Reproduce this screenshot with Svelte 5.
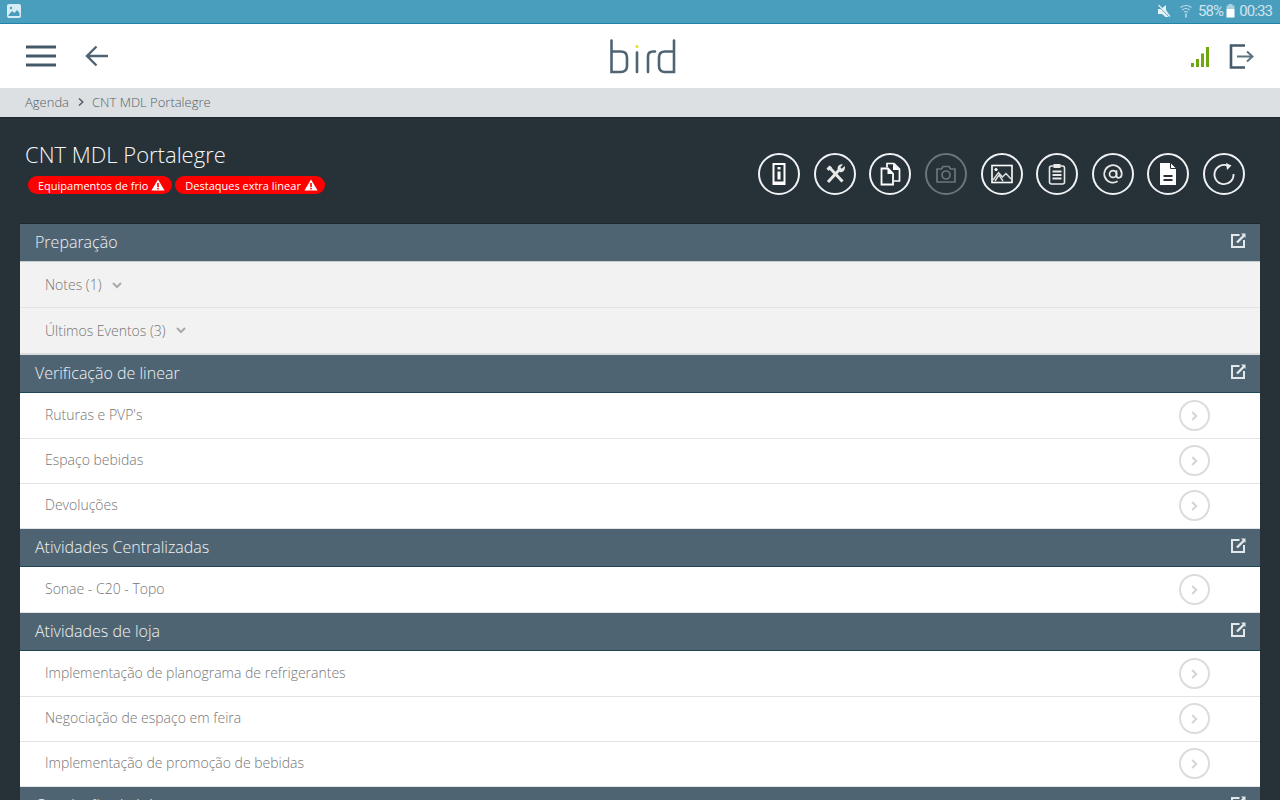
<script lang="ts">
  type Row = { label: string; chevron?: boolean };
  type Section = { title: string; muted?: boolean; rows: Row[] };

  const sections: Section[] = [
    {
      title: "Preparação",
      muted: true,
      rows: [{ label: "Notes (1)", chevron: true }, { label: "Últimos Eventos (3)", chevron: true }],
    },
    {
      title: "Verificação de linear",
      rows: [{ label: "Ruturas e PVP's" }, { label: "Espaço bebidas" }, { label: "Devoluções" }],
    },
    { title: "Atividades Centralizadas", rows: [{ label: "Sonae - C20 - Topo" }] },
    {
      title: "Atividades de loja",
      rows: [
        { label: "Implementação de planograma de refrigerantes" },
        { label: "Negociação de espaço em feira" },
        { label: "Implementação de promoção de bebidas" },
      ],
    },
    { title: "Conclusão de loja", rows: [] },
  ];

  const actions = ["info", "tools", "copy", "camera", "image", "clipboard", "at", "file", "refresh"];
</script>

{#snippet warning()}
  <svg class="warn" viewBox="0 0 14 12" width="14" height="12">
    <path d="M7 0.5 L13.6 11.5 H0.4 Z" fill="#fff" />
    <rect x="6.2" y="4" width="1.6" height="4" fill="#f00" />
    <rect x="6.2" y="8.8" width="1.6" height="1.6" fill="#f00" />
  </svg>
{/snippet}

<div class="screen">
  <div class="status">
    <svg class="notif" viewBox="0 0 14 14" width="14" height="14">
      <rect width="14" height="14" rx="2" fill="#d6ecf4" />
      <path d="M1.5 11 L5 7 L7.5 9 L10 6 L12.5 9 V12 H1.5 Z" fill="#4a9ebd" />
      <circle cx="4" cy="4" r="1.2" fill="#4a9ebd" />
    </svg>
    <div class="status-right">
      <svg class="mute" viewBox="0 0 14 14" width="14" height="14">
        <path d="M1 5 H4 L9 1 V6 L13 12 L11 13 H8.5 L5 10 H1 Z" fill="#e6f2f7" />
        <path d="M0.5 0.5 L13 13.5" stroke="#4a9ebd" stroke-width="1.2" />
        <path d="M1.5 1 L13 12.5" stroke="#e6f2f7" stroke-width="1.1" />
      </svg>
      <svg class="wifi" viewBox="0 0 14 14" width="14" height="14">
        <path d="M1.5 3.5 Q7 -0.5 12.5 3.5 M3.3 6 Q7 3 10.7 6 M5 8.3 Q7 6.8 9 8.3" fill="none" stroke="#bcdbe7" stroke-width="1.1" />
        <path d="M7 13.5 V9.5" stroke="#bcdbe7" stroke-width="1.6" />
      </svg>
      <span class="pct">58%</span>
      <svg viewBox="0 0 9 14" width="9" height="14">
        <rect x="2.5" y="0" width="4" height="2" fill="#a9d2e1" />
        <rect x="0.5" y="1.5" width="8" height="3.5" fill="#a9d2e1" />
        <rect x="0.5" y="5" width="8" height="8.5" fill="#fff" />
      </svg>
      <span>00:33</span>
    </div>
  </div>

  <header class="topbar">
    <div class="nav">
      <svg viewBox="0 0 30 22" width="30" height="22">
        <path d="M0 2 H30 M0 11 H30 M0 20 H30" stroke="#445a69" stroke-width="3" />
      </svg>
      <svg viewBox="0 0 24 22" width="24" height="22">
        <path d="M23 11 H2 M11.5 1.5 L2 11 L11.5 20.5" fill="none" stroke="#4e6472" stroke-width="2.4" />
      </svg>
    </div>
    <svg class="logo" viewBox="0 0 68 36" width="68" height="36">
      <g fill="none" stroke="#4e6472" stroke-width="2.6" stroke-linecap="round">
        <path d="M2.5 1.5 V33 H11.5 Q18 33 18 27 V18.5 Q18 12.5 11.5 12.5 H2.5" />
        <path d="M28 13.5 V33" />
        <path d="M39 33 V17.5 Q39 12.5 44 12.5 H46" />
        <path d="M65 1.5 V33 H56 Q50 33 50 27 V18.5 Q50 12.5 56 12.5 H65" />
      </g>
      <circle cx="28" cy="7.5" r="1.5" fill="#e3e020" />
    </svg>
    <div class="top-right">
      <svg viewBox="0 0 20 21" width="20" height="21">
        <path d="M1 17 h3 v4 h-3 Z M6 13 h3 v8 h-3 Z M11 7.5 h3 v13.5 h-3 Z M16 1 h3 v20 h-3 Z" fill="#6fa80e" />
      </svg>
      <svg viewBox="0 0 25 25" width="25" height="25">
        <path d="M16 1.5 H2 V23.5 H16" fill="none" stroke="#445a69" stroke-width="2.6" />
        <path d="M8 12.5 H23 M18 7.5 L23.5 12.5 L18 17.5" fill="none" stroke="#5e7280" stroke-width="2" />
      </svg>
    </div>
  </header>

  <nav class="crumbs">
    <span>Agenda</span>
    <svg viewBox="0 0 6 8" width="6" height="8"><path d="M1 0.5 L4.8 4 L1 7.5" fill="none" stroke="#4e5a62" stroke-width="1.4" /></svg>
    <span>CNT MDL Portalegre</span>
  </nav>

  <main class="body">
    <div class="head">
      <div>
        <h1>CNT MDL Portalegre</h1>
        <div class="badges">
          <span class="badge">Equipamentos de frio {@render warning()}</span>
          <span class="badge">Destaques extra linear {@render warning()}</span>
        </div>
      </div>
      <div class="actions">
        {#each actions as a}
          <div class="action" class:off={a === "camera"}>
            <svg viewBox="0 0 24 24" width="24" height="24">
              {#if a === "info"}
                <path fill-rule="evenodd" d="M5.5 1 H18.5 V23 H5.5 Z M7.5 3 V19.5 H16.5 V3 Z" fill="#fff" />
                <path d="M10.5 5 H13.5 V7.5 H10.5 Z M10.5 9.5 H13.5 V17.5 H10.5 Z" fill="#fff" />
              {:else if a === "tools"}
                <path d="M5 20 L17 7 M6 5 L19.5 19.5" stroke="#e8e8e8" stroke-width="3" fill="none" />
                <path d="M14.5 6.5 A4.2 4.2 0 0 1 20 2.5 L17.3 5.2 L18.8 6.8 L21.6 4 A4.2 4.2 0 0 1 16.8 10 Z" fill="#e8e8e8" />
                <path d="M3.5 6.5 L6.5 3.5 L9 5.5 L5.5 9 Z" fill="#e8e8e8" />
              {:else if a === "copy"}
                <path d="M9 5.5 V1.5 H16 L21.5 7 V19 H16" fill="none" stroke="#fff" stroke-width="1.7" />
                <path d="M15 1.5 V8 H21.5 Z" fill="#fff" />
                <path d="M3.5 6.5 H10 L15 11.5 V22.5 H3.5 Z" fill="none" stroke="#fff" stroke-width="1.8" />
                <path d="M9.5 6.5 V12 H15 Z" fill="#fff" />
              {:else if a === "camera"}
                <path d="M3 7 H7.5 L9 4.5 H15 L16.5 7 H21 V20 H3 Z" fill="none" stroke="#6d7478" stroke-width="1.7" />
                <circle cx="12" cy="13" r="4" fill="none" stroke="#6d7478" stroke-width="1.7" />
              {:else if a === "image"}
                <rect x="2" y="3.5" width="20" height="17" fill="none" stroke="#fff" stroke-width="1.6" />
                <path d="M3 18 L8.5 10.5 L12.5 15 L16 11.5 L21 17 M5 19 L9 13 L13 19" fill="none" stroke="#e0e0e0" stroke-width="1.4" />
                <circle cx="6" cy="7.5" r="1.6" fill="#fff" />
              {:else if a === "clipboard"}
                <rect x="4.5" y="4" width="15" height="18" rx="2" fill="none" stroke="#e8e8e8" stroke-width="1.6" />
                <rect x="8.5" y="2" width="7" height="4" fill="#e8e8e8" />
                <path d="M7.5 9.5 H16.5 M7.5 13 H16.5 M7.5 16.5 H16.5" stroke="#e8e8e8" stroke-width="2" />
              {:else if a === "at"}
                <g transform="translate(12 12) scale(0.92) translate(-12 -12)">
                  <circle cx="12" cy="12" r="3.8" fill="none" stroke="#e8e8e8" stroke-width="1.9" />
                  <path d="M15.8 8 V14 Q15.8 16.2 18 16.2 Q21.5 16.2 21.5 11.5 A9.5 9.5 0 1 0 17 20" fill="none" stroke="#e8e8e8" stroke-width="1.9" />
                </g>
              {:else if a === "file"}
                <path fill-rule="evenodd" d="M4 1 H14.5 L20 6.5 V23 H4 Z M7.5 13 V15 H16.5 V13 Z M7.5 17 V19 H16.5 V17 Z" fill="#fff" />
                <path d="M14.5 1 V6.5 H20" fill="none" stroke="#263238" stroke-width="1" />
              {:else}
                <path d="M16 3.8 A9.6 9.6 0 1 0 21.6 12" fill="none" stroke="#eee" stroke-width="1.8" />
                <path d="M14 1 L19.5 3.5 L15 8 Z" fill="#eee" />
              {/if}
            </svg>
          </div>
        {/each}
      </div>
    </div>

    <div class="sections">
      {#each sections as s}
        <section>
          <div class="section-head" class:soft={s.muted}>
            <span>{s.title}</span>
            <svg viewBox="0 0 15 15" width="15" height="15">
              <path d="M8.5 2 H1 V14 H13 V7" fill="none" stroke="#e4e8ea" stroke-width="2" />
              <path d="M6 9.5 L13 2.5" stroke="#e4e8ea" stroke-width="2.4" />
              <path d="M10 0.5 H14.5 V5 Z" fill="#e4e8ea" />
            </svg>
          </div>
          {#each s.rows as r}
            <div class="row" class:muted={s.muted}>
              <span>{r.label}</span>
              {#if r.chevron}
                <svg class="down" viewBox="0 0 10 7" width="10" height="7">
                  <path d="M1 1 L5 5 L9 1" fill="none" stroke="#a8a8a8" stroke-width="2" />
                </svg>
              {:else}
                <span class="go">
                  <svg viewBox="0 0 7 10" width="7" height="10">
                    <path d="M1.2 1 L5.2 5 L1.2 9" fill="none" stroke="#d4d4d4" stroke-width="2" />
                  </svg>
                </span>
              {/if}
            </div>
          {/each}
        </section>
      {/each}
    </div>
  </main>
</div>

<style>
  :global(body) {
    margin: 0;
    background: #263238;
  }
  .screen {
    width: 1280px;
    height: 800px;
    overflow: hidden;
    display: flex;
    flex-direction: column;
    font-family: "Open Sans", "Liberation Sans", sans-serif;
  }
  .status {
    flex: 0 0 24px;
    box-sizing: border-box;
    display: flex;
    align-items: center;
    justify-content: space-between;
    padding: 0 8px 1px 7px;
    background: #4a9ebd;
    border-bottom: 1px solid #1f84a8;
  }
  .status-right {
    display: flex;
    align-items: center;
    gap: 4px;
    color: #cfe4ed;
    font-family: Roboto, sans-serif;
    font-size: 15px;
    letter-spacing: -0.9px;
  }
  .wifi {
    margin: 0 1px 0 4px;
  }
  .pct {
    margin-right: -1px;
  }
  .topbar {
    flex: 0 0 64px;
    display: flex;
    align-items: center;
    justify-content: space-between;
    position: relative;
    background: #fff;
    padding: 0 26px;
  }
  .nav {
    display: flex;
    align-items: center;
    gap: 29px;
    margin-top: -1px;
  }
  .logo {
    position: absolute;
    left: 609px;
    top: 15px;
  }
  .top-right {
    display: flex;
    align-items: center;
    gap: 19px;
    margin-top: 1px;
  }
  .crumbs {
    flex: 0 0 30px;
    box-sizing: border-box;
    display: flex;
    align-items: center;
    gap: 8.5px;
    padding: 0 25px 1px;
    background: #dce0e3;
    color: #565f66;
    font-size: 13px;
    font-weight: 300;
    border-bottom: 1px solid #1f282d;
  }
  .body {
    flex: 1;
    min-height: 0;
    background: #263238;
  }
  .head {
    height: 105px;
    box-sizing: border-box;
    display: flex;
    justify-content: space-between;
    padding: 23px 35px 0 25px;
  }
  h1 {
    margin: 0;
    color: #f6f7f8;
    font-size: 22px;
    font-weight: 300;
    line-height: 27px;
  }
  .badges {
    display: flex;
    gap: 3px;
    margin: 8px 0 0 3px;
  }
  .badge {
    display: flex;
    align-items: center;
    gap: 3px;
    height: 18px;
    padding: 0 7px 0 10px;
    border-radius: 9px;
    background: #f00;
    color: #fff;
    font-size: 11px;
  }
  .actions {
    display: flex;
    gap: 13.6px;
    margin-top: 12px;
  }
  .action {
    width: 38px;
    height: 38px;
    display: flex;
    align-items: center;
    justify-content: center;
    border: 2px solid #f0f1f2;
    border-radius: 50%;
  }
  .action.off {
    border-color: #6d7478;
  }
  .sections {
    margin: 0 20px;
    background: #fff;
    border-top: 1px solid #1f282d;
  }
  .section-head {
    box-sizing: content-box;
    height: 35px;
    display: flex;
    align-items: center;
    justify-content: space-between;
    padding: 0 14px 2px 15px;
    background: #4f6473;
    color: #f0f3f4;
    font-size: 16px;
    font-weight: 300;
    border-bottom: 1px solid #1d4657;
  }
  .section-head.soft {
    border-bottom-color: #c9cdd0;
  }
  .section-head svg {
    margin-top: -3px;
  }
  .row {
    box-sizing: border-box;
    height: 45px;
    display: flex;
    align-items: center;
    gap: 10.5px;
    padding: 0 50px 3px 25px;
    background: #fff;
    color: #757575;
    font-size: 14px;
    font-weight: 300;
    border-bottom: 1px solid #e3e3e3;
  }
  .section-head + .row {
    height: 46px;
    padding-bottom: 2px;
  }
  .row.muted {
    height: 46px;
    padding-bottom: 0;
    background: #f2f2f2;
  }
  .row.muted:last-child {
    height: 47px;
    padding-bottom: 1px;
    border-bottom: 2px solid #dcdcdc;
  }
  .go {
    width: 27px;
    height: 27px;
    margin: 2px 0 0 auto;
    display: flex;
    align-items: center;
    justify-content: center;
    border: 2px solid #dcdcdc;
    border-radius: 50%;
  }
  .down {
    margin-top: 1px;
  }
</style>
